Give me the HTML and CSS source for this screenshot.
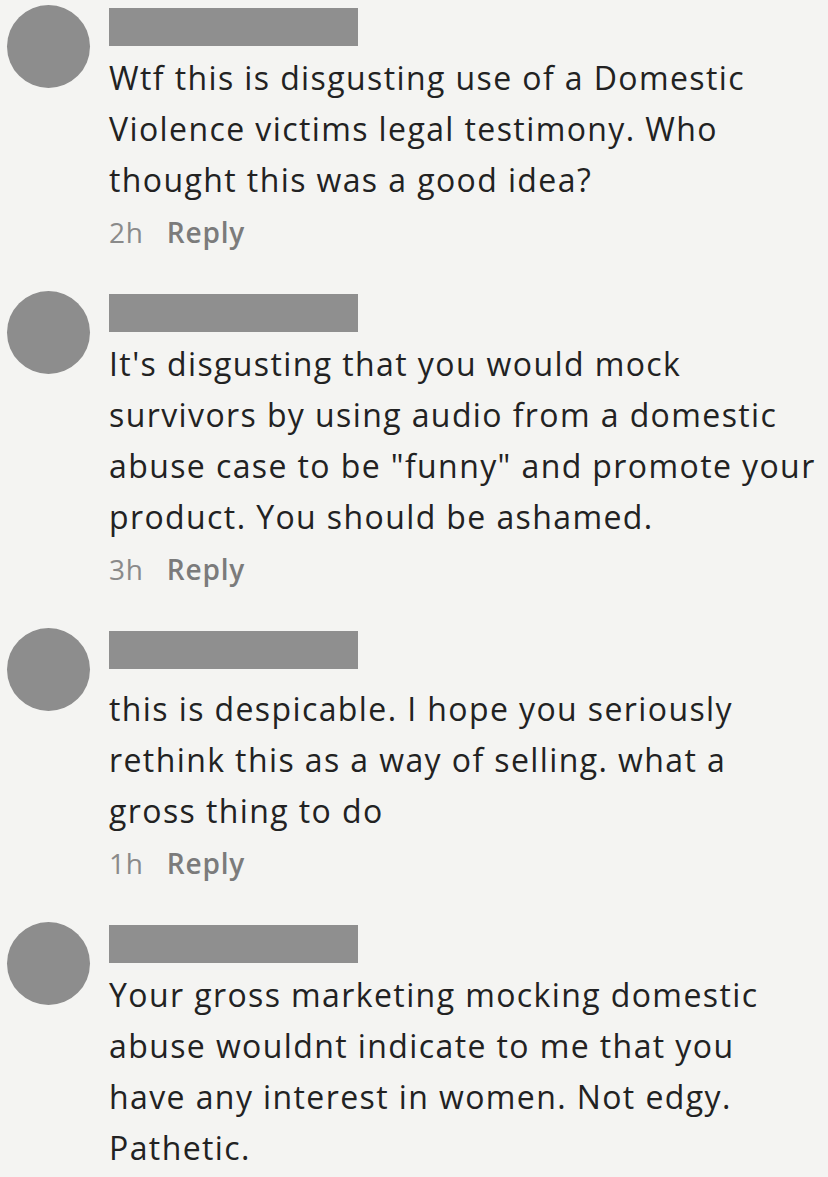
FILE: index.html
```html
<!DOCTYPE html>
<html lang="en">

<head>
    <meta charset="UTF-8">
    <title>Comments</title>
    <link rel="stylesheet" href="styles.css">
</head>

<body>
    <div class="comments">
        <div class="comment">
            <div class="avatar"></div>
            <div class="comment-body">
                <div class="name-bar"></div>
                <p class="comment-text">Wtf this is disgusting use of a Domestic<br>Violence victims legal testimony. Who<br>thought this was a good idea?</p>
                <div class="meta"><span class="time">2h</span><span class="reply">Reply</span></div>
            </div>
        </div>
        <div class="comment">
            <div class="avatar"></div>
            <div class="comment-body">
                <div class="name-bar"></div>
                <p class="comment-text">It's disgusting that you would mock<br>survivors by using audio from a domestic<br>abuse case to be "funny" and promote your<br>product. You should be ashamed.</p>
                <div class="meta"><span class="time">3h</span><span class="reply">Reply</span></div>
            </div>
        </div>
        <div class="comment">
            <div class="avatar"></div>
            <div class="comment-body">
                <div class="name-bar"></div>
                <p class="comment-text spaced">this is despicable. I hope you seriously<br>rethink this as a way of selling. what a<br>gross thing to do</p>
                <div class="meta"><span class="time">1h</span><span class="reply">Reply</span></div>
            </div>
        </div>
        <div class="comment">
            <div class="avatar"></div>
            <div class="comment-body">
                <div class="name-bar"></div>
                <p class="comment-text">Your gross marketing mocking domestic<br>abuse wouldnt indicate to me that you<br>have any interest in women. Not edgy.<br>Pathetic.</p>
            </div>
        </div>
    </div>
</body>
</html>
```

FILE: styles.css
```css
body {
    font-family: "Open Sans", "Liberation Sans", sans-serif;
    margin: 0;
    padding: 0;
    background-color: #f4f4f2;
    color: #222222;
    font-variant-ligatures: none;
}

.comments {
    display: flex;
    flex-direction: column;
    gap: 44px;
    padding: 8px 0 0 7px;
}

.comment {
    display: flex;
    align-items: flex-start;
    gap: 19px;
}

.avatar {
    width: 83px;
    height: 83px;
    border-radius: 50%;
    background-color: #8d8d8d;
    margin-top: -3px;
    flex-shrink: 0;
}

.comment-body {
    display: flex;
    flex-direction: column;
}

.name-bar {
    width: 249px;
    height: 38px;
    background-color: #8f8f8f;
}

.comment-text {
    margin: 6px 0 0;
    font-size: 32px;
    line-height: 51px;
    letter-spacing: 1.4px;
    white-space: nowrap;
}

.comment-text.spaced {
    margin-top: 14px;
}

.meta {
    margin-top: 9px;
    display: flex;
    gap: 23px;
    font-size: 28px;
    line-height: 36px;
    letter-spacing: 0.8px;
}

.time {
    color: #8a8a8a;
}

.reply {
    color: #7b7b7b;
    font-weight: 600;
}
```
